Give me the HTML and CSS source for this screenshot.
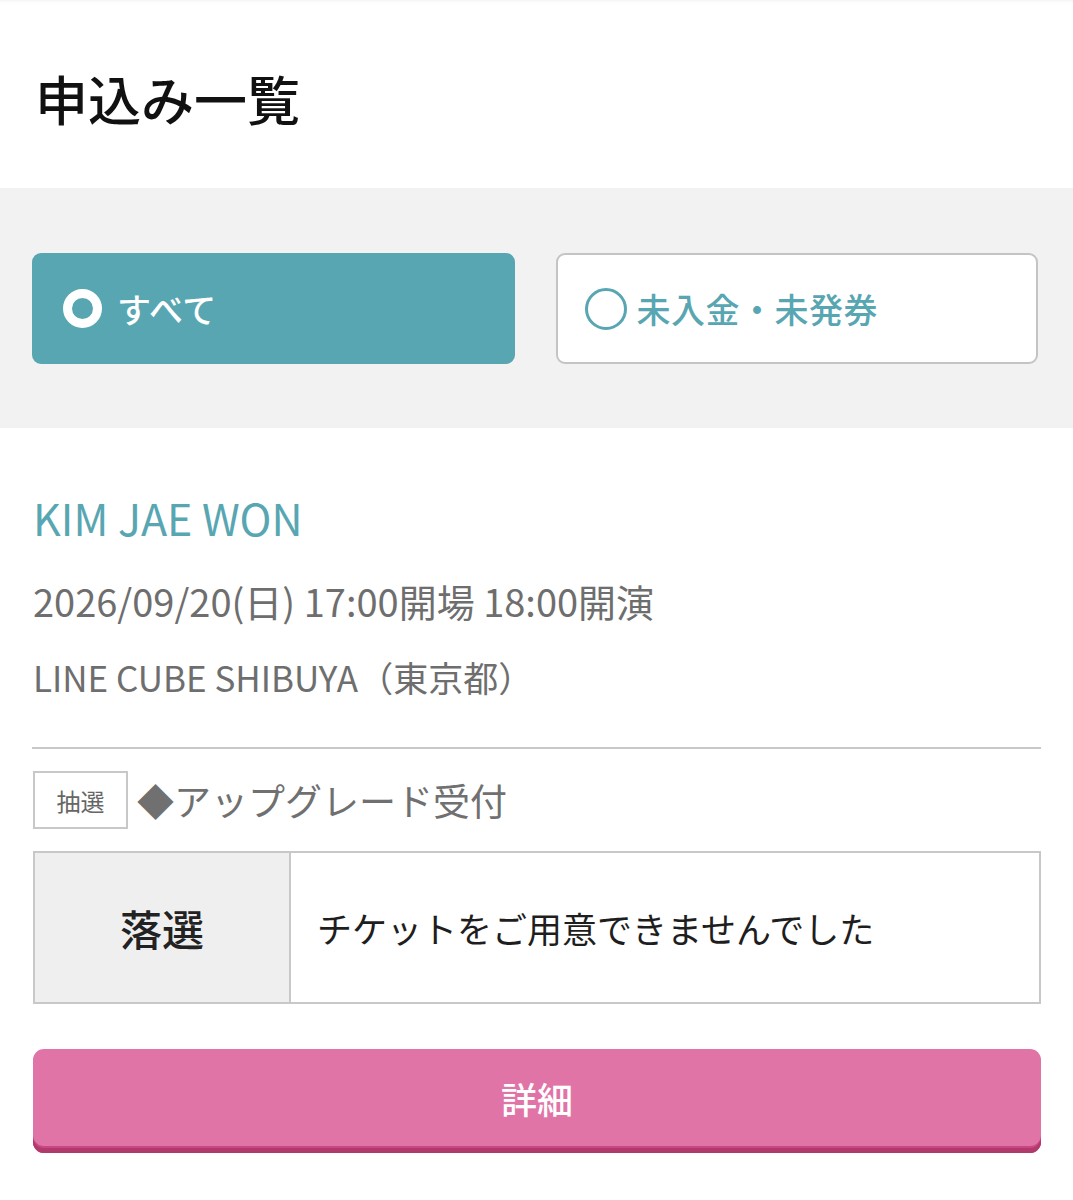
FILE: index.html
```html
<!DOCTYPE html>
<html lang="ja">
<head>
<meta charset="utf-8">
<title>申込み一覧</title>
<link rel="stylesheet" href="styles.css">
</head>
<body>
<header class="page-head">
  <h1 class="page-title">申込み一覧</h1>
</header>
<section class="filter">
  <button class="filter-btn is-active" type="button">
    <span class="radio radio-on"></span>
    <span class="filter-label">すべて</span>
  </button>
  <button class="filter-btn" type="button">
    <span class="radio radio-off"></span>
    <span class="filter-label">未入金・未発券</span>
  </button>
</section>
<main class="entry">
  <h2 class="event-name">KIM JAE WON</h2>
  <p class="event-date">2026/09/20(日) 17:00開場 18:00開演</p>
  <p class="event-venue">LINE CUBE SHIBUYA（東京都）</p>
  <hr class="divider">
  <div class="entry-type">
    <span class="tag">抽選</span>
    <span class="type-name">◆アップグレード受付</span>
  </div>
  <div class="result">
    <div class="result-label">落選</div>
    <div class="result-text">チケットをご用意できませんでした</div>
  </div>
  <button class="detail-btn" type="button">詳細</button>
</main>
</body>
</html>
```

FILE: styles.css
```css
* { box-sizing: border-box; }
html, body {
  margin: 0;
  padding: 0;
  background: #ffffff;
}
body {
  font-family: "Noto Sans CJK JP", "Noto Sans", sans-serif;
  color: #111;
}
.page-head {
  height: 188px;
  padding: 72px 35px 0;
  box-shadow: inset 0 3px 3px -2px rgba(0,0,0,0.06);
}
.page-title {
  margin: 0;
  font-size: 53px;
  line-height: 53px;
  font-weight: 500;
  color: #111;
}
.filter {
  background: #f2f2f2;
  height: 240px;
  padding: 65px 35px 0 32px;
  display: grid;
  grid-template-columns: 1fr 1fr;
  column-gap: 41px;
  align-items: start;
}
.filter-btn {
  height: 111px;
  border-radius: 9px;
  border: 2px solid #c4c4c4;
  background: #fff;
  display: flex;
  align-items: center;
  padding: 0 0 0 27px;
  font-family: inherit;
  cursor: pointer;
}
.filter-btn.is-active {
  background: #58a6b2;
  border-color: #58a6b2;
  padding-left: 29px;
}
.radio {
  display: inline-block;
  border-radius: 50%;
  flex: none;
}
.radio-on {
  width: 39px;
  height: 39px;
  border: 9px solid #fff;
  background: transparent;
  margin-right: 15px;
}
.radio-off {
  width: 42px;
  height: 42px;
  border: 3px solid #58a6b2;
  margin-right: 10px;
}
.filter-label {
  font-size: 34px;
  line-height: 40px;
  font-weight: 500;
  color: #58a6b2;
  letter-spacing: 0.5px;
}
.is-active .filter-label { color: #fff; }
.entry {
  padding: 0 32px 0 33px;
}
.event-name {
  margin: 61px 0 0;
  font-size: 43px;
  line-height: 56px;
  font-weight: 400;
  color: #58a6b2;
}
.event-date,
.event-venue {
  margin: 0;
  line-height: 48px;
  color: #6e6e6e;
}
.event-date { margin-top: 32px; font-size: 38px; }
.event-venue { margin-top: 28px; font-size: 35px; }
.divider {
  margin: 46px 0 0 -1px;
  border: 0;
  height: 2px;
  background: #c8c8c8;
}
.entry-type {
  margin-top: 22px;
  display: flex;
  align-items: center;
}
.tag {
  width: 95px;
  height: 58px;
  border: 2px solid #c8c8c8;
  display: flex;
  align-items: center;
  justify-content: center;
  font-size: 24px;
  color: #666;
}
.type-name {
  margin-left: 9px;
  font-size: 37px;
  line-height: 48px;
  color: #707070;
}
.result {
  margin-top: 22px;
  height: 153px;
  border: 2px solid #c8c8c8;
  display: flex;
}
.result-label {
  width: 256px;
  flex: none;
  background: #efefef;
  border-right: 2px solid #c8c8c8;
  display: flex;
  align-items: center;
  justify-content: center;
  font-size: 42px;
  font-weight: 500;
  color: #222;
}
.result-text {
  display: flex;
  align-items: center;
  padding-left: 26px;
  font-size: 35px;
  color: #1e1e1e;
}
.detail-btn {
  display: block;
  width: 100%;
  margin-top: 45px;
  height: 104px;
  border: 0;
  border-radius: 11px;
  background: #e174a6;
  box-shadow: inset 0 -5px 0 #b03a6c, inset 0 -7px 0 #c94784;
  color: #fff;
  font-family: inherit;
  font-size: 36px;
  font-weight: 500;
  padding: 0 0 6px;
  cursor: pointer;
}
```
